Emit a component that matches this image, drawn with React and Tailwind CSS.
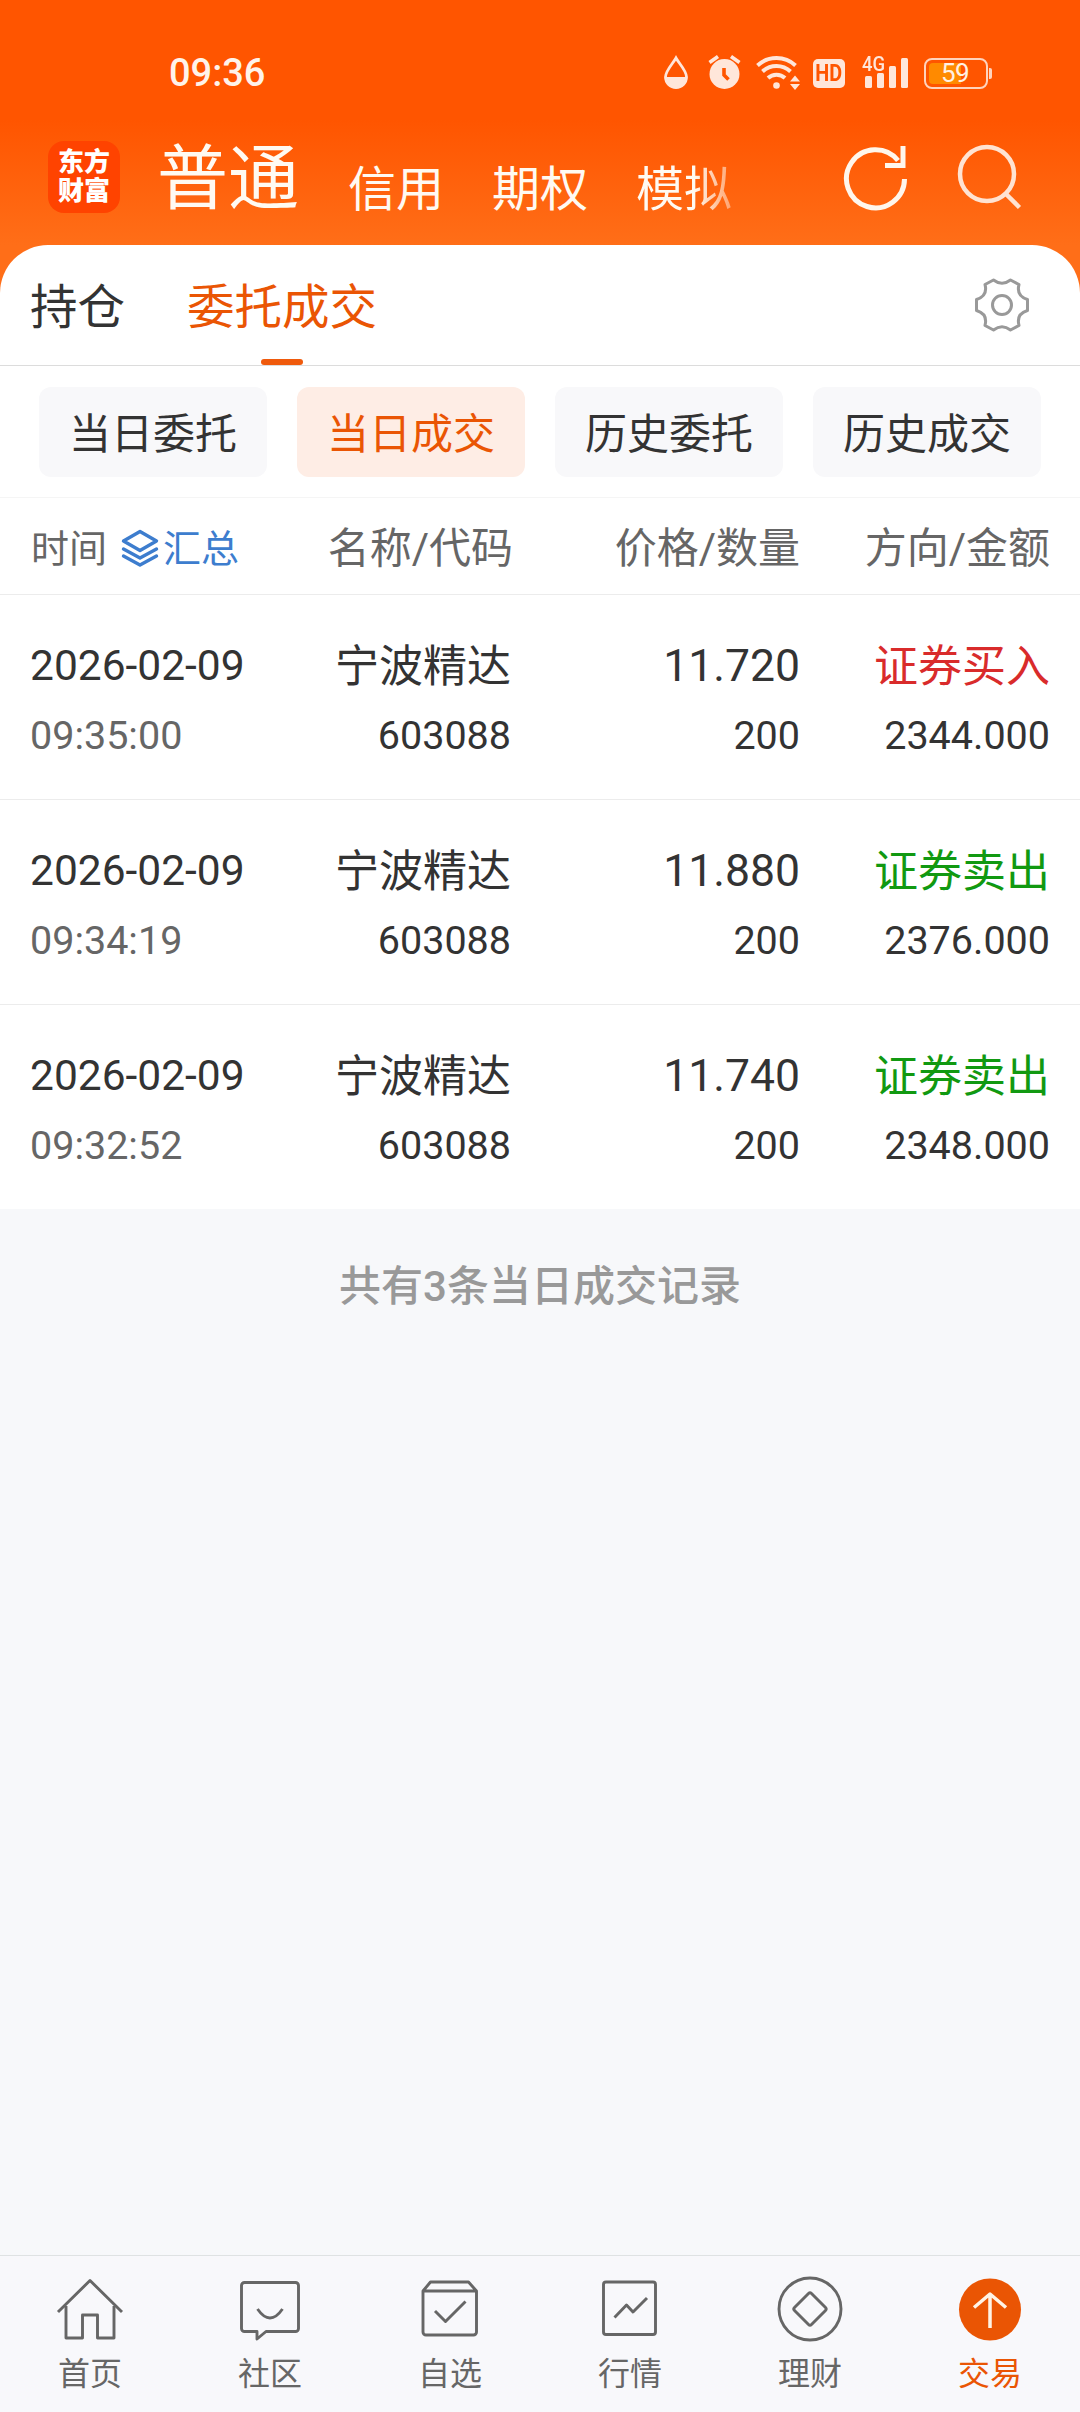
const marketTabs = ['信用', '期权'];

const filters = [
  { label: '当日委托' },
  { label: '当日成交', active: true },
  { label: '历史委托' },
  { label: '历史成交' },
];

const records = [
  { date: '2026-02-09', time: '09:35:00', name: '宁波精达', code: '603088', price: '11.720', count: '200', side: 'buy', amount: '2344.000' },
  { date: '2026-02-09', time: '09:34:19', name: '宁波精达', code: '603088', price: '11.880', count: '200', side: 'sell', amount: '2376.000' },
  { date: '2026-02-09', time: '09:32:52', name: '宁波精达', code: '603088', price: '11.740', count: '200', side: 'sell', amount: '2348.000' },
];

function StatusBar() {
  return (
    <div className="flex h-[100px] items-start justify-between pt-[51px] pr-[88px] pl-[169px] text-[#ffe6da]">
      <span className="text-[38px] leading-[44px] font-medium text-[#fff3ea]">09:36</span>
      <div className="flex h-[44px] items-center">
        <svg className="mr-[20px] h-[36px] w-[24px]" viewBox="0 0 24 36" fill="none">
          <path d="M12 3C9 8.500 1.500 15.500 1.500 22a10.500 10.500 0 0 0 21 0C22.500 15.500 15 8.500 12 3Z" stroke="currentColor" strokeWidth="2.800" />
          <path d="M1.500 22a10.500 10.500 0 0 0 21 0Z" fill="currentColor" />
        </svg>
        <svg className="mr-[15px] h-[36px] w-[33px]" viewBox="0 0 33 36" fill="none">
          <circle cx="16.500" cy="19" r="15" fill="currentColor" />
          <path d="M1.500 7.500 10 1.500M31.500 7.500 23 1.500" stroke="currentColor" strokeWidth="3.600" />
          <path d="M16 13v7l4.500 4.500" stroke="#ff5500" strokeWidth="3.600" />
        </svg>
        <svg className="mr-[13px] h-[36px] w-[44px]" viewBox="0 0 44 36" fill="none">
          <g stroke="currentColor" strokeWidth="4">
            <path d="M1.500 10.500a28 28 0 0 1 38 0" />
            <path d="M6.500 16.500a20.500 20.500 0 0 1 28 0" />
            <path d="M12 23a12.500 12.500 0 0 1 17 0" />
          </g>
          <circle cx="20.500" cy="30.500" r="3.300" fill="currentColor" />
          <path d="M34 26.500h10l-5-6ZM34 29h10l-5 6Z" fill="currentColor" />
        </svg>
        <span className="mr-[17px] flex h-[29px] w-[32px] items-center justify-center rounded-[5px] bg-[#ffe6da] text-[#ff5500]">
          <span className="scale-x-[0.86] text-[23px] leading-[29px] font-bold">HD</span>
        </span>
        <div className="relative mr-[16px] h-[36px] w-[46px]">
          <span className="absolute top-0 left-0 origin-left scale-x-[0.88] text-[21px] leading-[18px] font-medium">4G</span>
          <div className="absolute right-0 bottom-[3px] flex items-end gap-[5px]">
            <i className="h-[12px] w-[7px] rounded-[1.500px] bg-[#ffe6da]" />
            <i className="h-[15px] w-[7px] rounded-[1.500px] bg-[#ffe6da]" />
            <i className="h-[22px] w-[7px] rounded-[1.500px] bg-[#ffe6da]" />
            <i className="h-[30px] w-[7px] rounded-[1.500px] bg-[#ffe6da]" />
          </div>
        </div>
        <div className="relative flex h-[31px] w-[64px] items-center justify-center rounded-[8px] border-2 border-[#ffd3bd]">
          <i className="absolute top-[3px] left-[3px] h-[21px] w-[32px] rounded-l-[4px] bg-[#ff8a00]" />
          <span className="relative -left-px text-[26px] leading-[27px] tracking-[-0.6px] text-[#fff0e4]">59</span>
        </div>
        <i className="ml-[1px] h-[11px] w-[3px] rounded-r-[2px] bg-[#ffd3bd]" />
      </div>
    </div>
  );
}

function Header() {
  return (
    <header className="flex h-[145px] items-center pt-[9px] pr-[58px] pl-[48px]">
      <div className="flex h-[72px] w-[72px] flex-col items-center justify-center rounded-[16px] bg-[#ff4300] text-[26px] leading-[29px] font-black text-white">
        <span>东方</span>
        <span>财富</span>
      </div>
      <nav className="ml-[37px] flex w-[600px] items-baseline pt-[3px] text-[#fffaf2]">
        <span className="mr-[49px] text-[71px] leading-[76px]">普通</span>
        {marketTabs.map((tab) => (
          <span key={tab} className="mr-[48px] pt-[8px] text-[48px] leading-[56px]">
            <span className="relative top-[3px]">{tab}</span>
          </span>
        ))}
        <span className="relative top-[3px] bg-linear-to-r from-[#fffaf2] from-60% to-[#ffa06a] bg-clip-text text-[48px] leading-[56px] text-transparent">模拟</span>
      </nav>
      <svg className="ml-[85px] h-[68px] w-[68px]" viewBox="0 0 68 68" fill="none" stroke="#fff6ec" strokeWidth="5">
        <path d="M62.500 36A29 29 0 1 1 56 17.500" />
        <path d="M61 3v19.500H43" />
      </svg>
      <svg className="ml-auto h-[68px] w-[68px]" viewBox="0 0 68 68" fill="none" stroke="#ffe3d2" strokeWidth="4.500">
        <circle cx="33" cy="31" r="27" />
        <path d="m51.500 50.500 14 14" />
      </svg>
    </header>
  );
}

function PageTabs() {
  return (
    <div className="flex h-[121px] items-start justify-between rounded-t-[48px] border-b border-[#dcdcdc] bg-white pr-[50px] pl-[30px]">
      <div className="flex h-[120px] text-[47.500px] leading-[126px]">
        <span className="mr-[62px] text-[#333333]">持仓</span>
        <span className="relative text-[#ea5504]">
          委托成交
          <i className="absolute top-[114px] left-1/2 h-[6px] w-[42px] -translate-x-1/2 rounded-full bg-[#ef5a0c]" />
        </span>
      </div>
      <svg className="mt-[32px] h-[56px] w-[56px]" viewBox="-28 -28 56 56" fill="none" stroke="#999999" strokeWidth="3" strokeLinejoin="round">
        <path d="M-8.500-25Q0-18.500 8.500-25L17-20.500Q14-9 25.500-5.500V5.500Q14 9 17 20.500L8.500 25Q0 18.500-8.500 25L-17 20.500Q-14 9-25.500 5.500V-5.500Q-14-9-17-20.500Z" />
        <circle r="9.500" />
      </svg>
    </div>
  );
}

function Filters() {
  return (
    <div className="flex h-[132px] gap-[30px] border-b border-[#f5f5f5] bg-white px-[39px] pt-[21px]">
      {filters.map(({ label, active }) => (
        <button
          key={label}
          className={`h-[90px] flex-1 rounded-xl pt-[5px] text-[42px] leading-[85px] ${active ? 'bg-[#feede5] text-[#ea5504]' : 'bg-[#f8f8fa] text-[#333333]'}`}
        >
          {label}
        </button>
      ))}
    </div>
  );
}

function TableHead() {
  return (
    <div className="grid h-[97px] grid-cols-[240px_241px_289px_250px] items-center border-b border-[#ececec] bg-white px-[30px] pt-[4px] text-right text-[42px] text-[#666666]">
      <div className="flex items-center pt-[3px] pl-px text-[38px]">
        <span>时间</span>
        <svg className="mb-[3px] ml-[14px] h-[38px] w-[38px]" viewBox="0 0 38 38" fill="none" stroke="#3d7dce" strokeWidth="3.400" strokeLinejoin="round" strokeLinecap="round">
          <path d="M19 2.500 35.500 12 19 21.500 2.500 12Z" />
          <path d="M2.500 20 19 29l16.500-9M2.500 27 19 36l16.500-9" />
        </svg>
        <span className="ml-[4px] text-[#3d7dce]">汇总</span>
      </div>
      <span className="-mr-[2px]">名称/代码</span>
      <span>价格/数量</span>
      <span>方向/金额</span>
    </div>
  );
}

function RecordRow({ record }) {
  const isBuy = record.side === 'buy';

  return (
    <div className="grid h-[205px] grid-cols-[240px_241px_289px_250px] border-b border-[#ececec] bg-white px-[30px] pt-[36px] text-right text-[39.500px] leading-[70px] text-[#333333] last:h-[204px] last:border-b-0">
      <div className="flex flex-col text-left">
        <span className="text-[42.500px]">{record.date}</span>
        <span className="text-[#666666]">{record.time}</span>
      </div>
      <div className="flex flex-col">
        <span className="-mb-[3px] text-[44px] leading-[73px]">{record.name}</span>
        <span>{record.code}</span>
      </div>
      <div className="flex flex-col">
        <span className="text-[44.500px]">{record.price}</span>
        <span>{record.count}</span>
      </div>
      <div className="flex flex-col">
        <span className={`-mb-[3px] text-[44px] leading-[73px] ${isBuy ? 'text-[#d92b2b]' : 'text-[#119911]'}`}>{isBuy ? '证券买入' : '证券卖出'}</span>
        <span>{record.amount}</span>
      </div>
    </div>
  );
}

const navItems = [
  {
    label: '首页',
    icon: (
      <>
        <path d="m2 37 32-31.500L66 37" />
        <path d="M10 31v32h16.500V40h15v23H58V31" />
      </>
    ),
  },
  {
    label: '社区',
    icon: (
      <>
        <path d="M8.500 7.500h51a3 3 0 0 1 3 3v43a3 3 0 0 1-3 3H30l-9 7.500v-7.500H8.500a3 3 0 0 1-3-3v-43a3 3 0 0 1 3-3Z" />
        <path d="M21.500 34q12.500 18 25 0" />
      </>
    ),
  },
  {
    label: '自选',
    icon: (
      <>
        <path d="M7 16 14.500 7h38l8 9v41a3 3 0 0 1-3 3H10a3 3 0 0 1-3-3ZM7 16h53.500" />
        <path d="m19 36 10.500 10.500 20-20" />
      </>
    ),
  },
  {
    label: '行情',
    icon: (
      <>
        <rect x="7.500" y="7" width="52" height="52.500" rx="2.500" />
        <path d="M18.500 42.500 30.500 30l6.500 7 14-14" />
      </>
    ),
  },
  {
    label: '理财',
    icon: (
      <>
        <circle cx="34" cy="34" r="31" />
        <path d="M32.500 18.500q1.500-1.500 3 0L49.500 32.500q1.500 1.500 0 3L35.500 49.500q-1.500 1.500-3 0L18.500 35.500q-1.500-1.500 0-3Z" />
      </>
    ),
  },
  {
    label: '交易',
    active: true,
    icon: (
      <>
        <circle cx="34" cy="34.500" r="31" fill="#ea5504" stroke="none" />
        <path d="M34 53V19M18 32.500 34 19l16 13.500" stroke="#fff3e6" strokeWidth="3.500" />
      </>
    ),
  },
];

function BottomNav() {
  return (
    <nav className="grid h-[157px] grid-cols-6 border-t border-[#dfe2e3] bg-[#f8f8fb]">
      {navItems.map(({ label, icon, active }) => (
        <div key={label} className={`flex flex-col items-center pt-[19px] ${active ? 'text-[#ea5504]' : 'text-[#666666]'}`}>
          <svg className="h-[68px] w-[68px]" viewBox="0 0 68 68" fill="none" stroke="currentColor" strokeWidth="2.900" strokeLinejoin="round">
            {icon}
          </svg>
          <span className="mt-[9px] text-[32px] leading-[44px]">{label}</span>
        </div>
      ))}
    </nav>
  );
}

export default function App() {
  return (
    <div className="flex h-[2412px] w-[1080px] flex-col overflow-hidden bg-[#f7f8fa] font-['Roboto','Noto_Sans_CJK_SC',sans-serif]">
      <div className="bg-[linear-gradient(#ff5500_0,#ff5500_120px,#ff6e18_245px)]">
        <StatusBar />
        <Header />
        <PageTabs />
      </div>
      <main className="flex-1">
        <Filters />
        <TableHead />
        <div>
          {records.map((record) => (
            <RecordRow key={record.time} record={record} />
          ))}
        </div>
        <p className="mt-[48px] text-center text-[42px] leading-[60px] font-medium text-[#999999]">共有3条当日成交记录</p>
      </main>
      <BottomNav />
    </div>
  );
}
